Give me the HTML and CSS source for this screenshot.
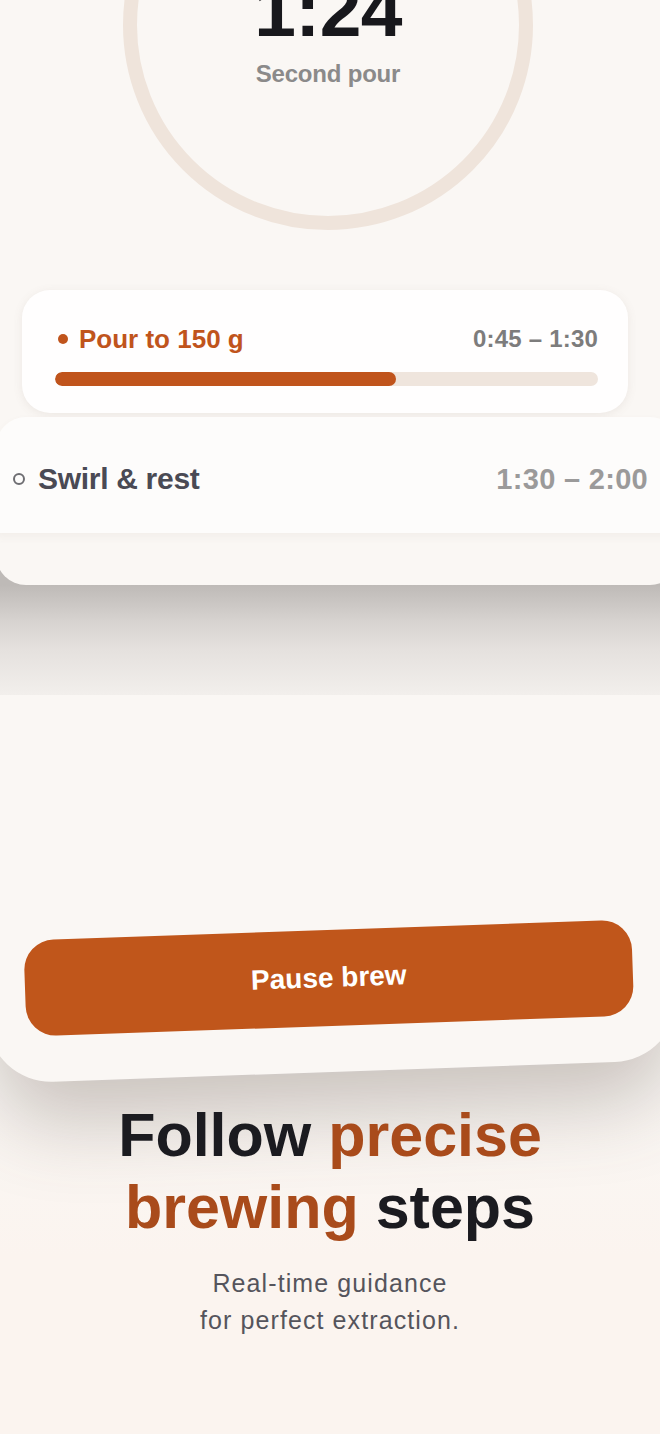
FILE: index.html
```html
<!DOCTYPE html>
<html lang="en">
<head>
<meta charset="utf-8">
<title>Brew guide</title>
<link rel="stylesheet" href="styles.css">
</head>
<body>
<main class="page">
  <section class="timer">
    <div class="ring">
      <div class="time">1:24</div>
      <div class="phase">Second pour</div>
    </div>
  </section>

  <section class="steps">
    <div class="step-card">
      <div class="step-head">
        <span class="step-name active"><span class="dot"></span>Pour to 150 g</span>
        <span class="step-time">0:45 – 1:30</span>
      </div>
      <div class="bar"><div class="bar-fill" style="width:62.8%"></div></div>
    </div>
    <div class="panel">
      <div class="panel-row">
        <span class="step-name next"><span class="ring-dot"></span>Swirl &amp; rest</span>
        <span class="step-time next-time">1:30 – 2:00</span>
      </div>
    </div>
    <div class="shade"></div>
  </section>

  <section class="lower">
    <div class="sheet">
      <button class="pause" type="button">Pause brew</button>
    </div>
    <div class="caption">
      <h1 class="title">Follow <span class="accent">precise</span><br><span class="accent">brewing</span> steps</h1>
      <p class="subtitle">Real-time guidance<br>for perfect extraction.</p>
    </div>
  </section>
</main>
</body>
</html>
```

FILE: styles.css
```css
html, body {
  margin: 0;
  padding: 0;
}
body {
  width: 660px;
  height: 1434px;
  overflow: hidden;
  background: #faf7f4;
  font-family: "Liberation Sans", Arial, sans-serif;
}
.page {
  width: 660px;
  overflow: hidden;
}

/* timer */
.timer {
  display: flex;
  align-items: flex-start;
  height: 290px;
}
.ring {
  width: 410px;
  height: 410px;
  margin: -180px 0 0 123px;
  box-sizing: border-box;
  border: 14px solid #efe4db;
  border-radius: 50%;
  display: flex;
  flex-direction: column;
  align-items: center;
  padding-top: 139px;
}
.time {
  font-size: 75px;
  line-height: 75px;
  font-weight: 700;
  color: #18181c;
  letter-spacing: -0.6px;
}
.phase {
  margin-top: 14px;
  font-size: 24px;
  line-height: 24px;
  font-weight: 700;
  color: #8b8a8a;
  letter-spacing: -0.2px;
}

/* steps */
.steps {
  position: relative;
}
.step-card {
  margin: 0 32px 0 22px;
  height: 123px;
  box-sizing: border-box;
  padding: 35px 30px 0 33px;
  background: #fffefe;
  border-radius: 28px;
  box-shadow: 0 2px 10px rgba(120, 100, 90, 0.10);
}
.step-head {
  display: flex;
  justify-content: space-between;
  align-items: center;
  height: 28px;
}
.step-name {
  display: flex;
  align-items: center;
  font-weight: 700;
}
.step-name.active {
  font-size: 26px;
  color: #c0541c;
}
.dot {
  width: 10px;
  height: 10px;
  border-radius: 50%;
  background: #c0541c;
  margin: 0 11px 0 3px;
}
.step-time {
  font-size: 24px;
  font-weight: 700;
  color: #7d7c7c;
  letter-spacing: 0.2px;
}
.bar {
  margin-top: 19px;
  height: 14px;
  border-radius: 7px;
  background: #efe5dd;
  overflow: hidden;
}
.bar-fill {
  height: 100%;
  border-radius: 7px;
  background: #c0541c;
}

.panel {
  position: relative;
  z-index: 1;
  margin: 4px 0 0 -4px;
  width: 684px;
  height: 168px;
  background: #faf7f4;
  border-radius: 30px;
}
.panel-row {
  height: 116px;
  box-sizing: border-box;
  padding: 8px 32px 0 17px;
  display: flex;
  justify-content: space-between;
  align-items: center;
  background: #fdfcfb;
  border-radius: 30px 30px 0 0;
  box-shadow: 0 4px 8px rgba(120, 100, 90, 0.06);
}
.step-name.next {
  font-size: 30px;
  color: #4a4a54;
  letter-spacing: -0.3px;
}
.ring-dot {
  width: 8px;
  height: 8px;
  border: 2px solid #6e6e72;
  border-radius: 50%;
  margin-right: 13px;
}
.next-time {
  font-size: 29px;
  color: #9b9a9a;
  letter-spacing: 0.3px;
}
.shade {
  margin-top: -30px;
  height: 140px;
  background: linear-gradient(#bebab7 0, #bebab7 30px, #d6d2cf 65px, #e5e1de 95px, #f2efec 140px);
}

/* lower */
.lower {
  position: relative;
  z-index: 2;
  height: 739px;
  overflow: hidden;
  background: linear-gradient(#faf7f4 0, #faf7f4 400px, #fbf4ef 560px, #fbf4ef 100%);
  display: flex;
  flex-direction: column;
  align-items: center;
}
.sheet {
  align-self: flex-start;
  flex: none;
  margin: -30px 0 0 -18px;
  width: 690px;
  height: 407px;
  box-sizing: border-box;
  padding: 265px 0 0 39px;
  background: #faf7f4;
  border-radius: 0 0 64px 64px;
  transform: rotate(-2deg);
  box-shadow: 0 46px 80px -6px rgba(90, 72, 62, 0.30);
}
.pause {
  display: block;
  width: 608px;
  height: 96px;
  border: 0;
  border-radius: 30px;
  background: #c0561b;
  color: #ffffff;
  font-family: "Liberation Sans", Arial, sans-serif;
  font-size: 28px;
  font-weight: 700;
  padding: 0;
}
.caption {
  position: relative;
  z-index: 1;
  text-align: center;
}
.title {
  margin: 27px 0 0;
  font-size: 61px;
  line-height: 72px;
  font-weight: 700;
  color: #1b1b20;
}
.accent {
  color: #a94b1b;
}
.subtitle {
  margin: 22px 0 0;
  font-size: 25px;
  line-height: 37px;
  color: #55545c;
  letter-spacing: 1.1px;
}
```
